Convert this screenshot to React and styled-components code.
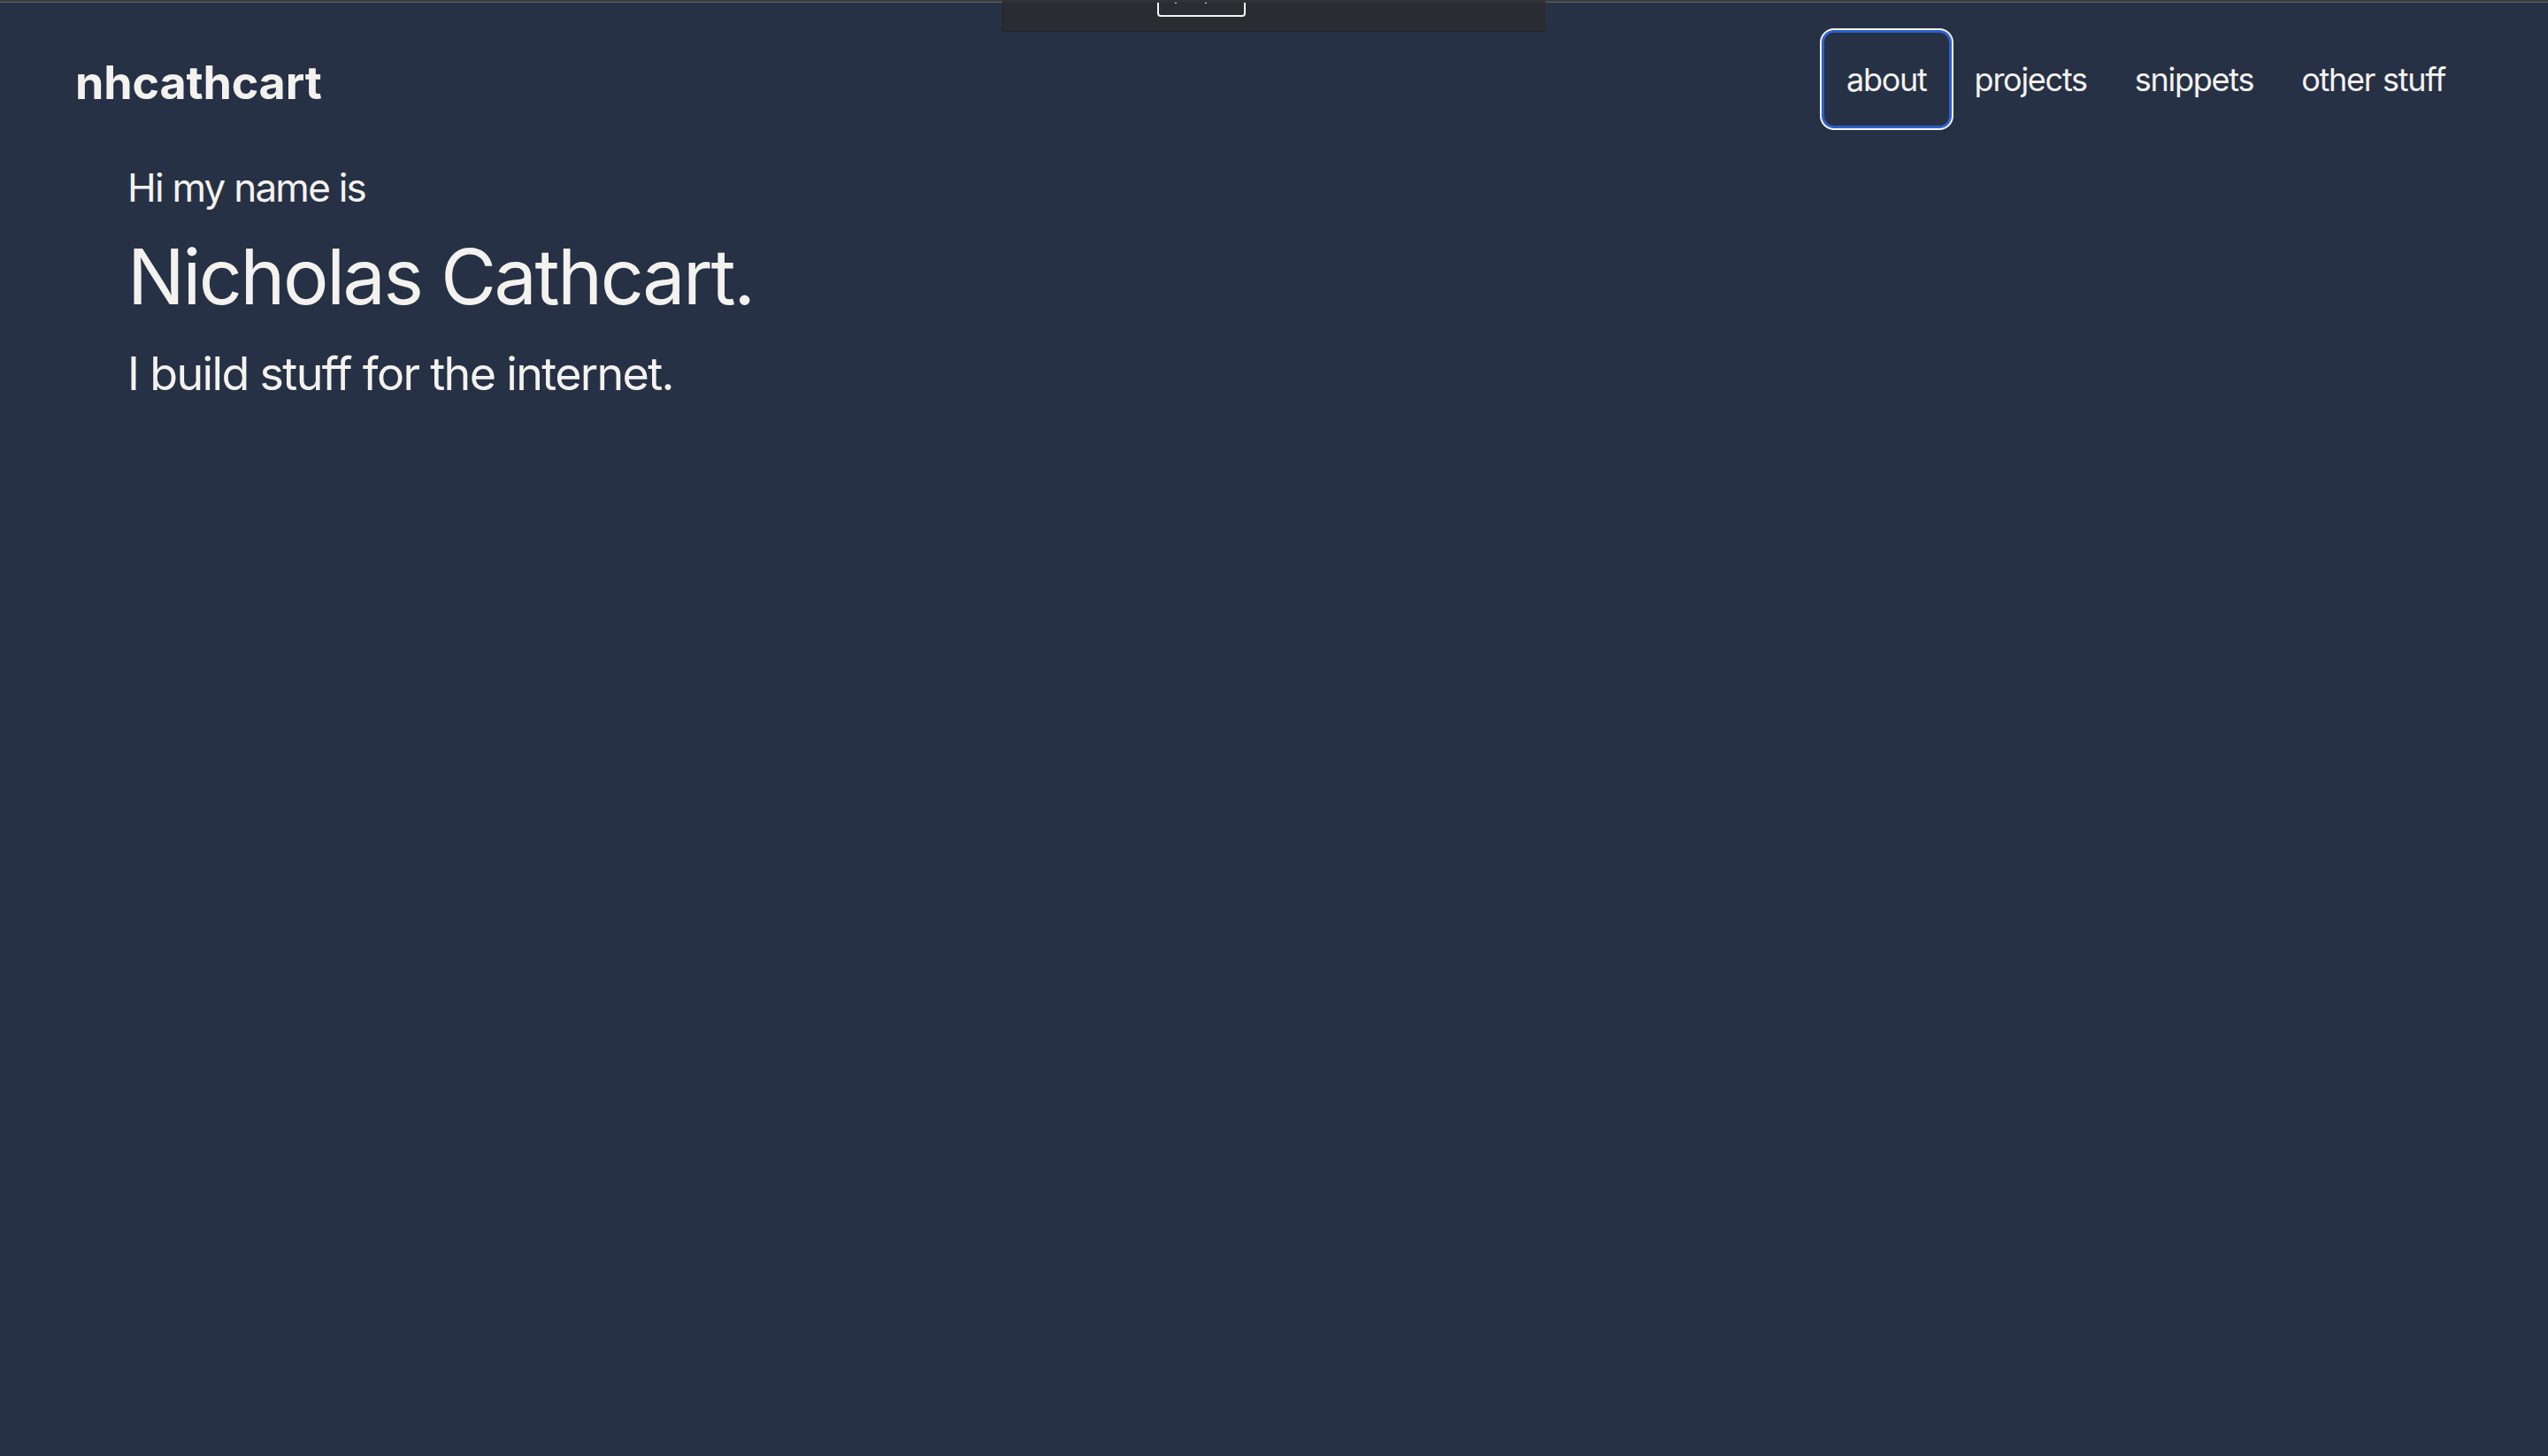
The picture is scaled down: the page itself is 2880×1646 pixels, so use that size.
import React from 'react';
import styled, { createGlobalStyle } from 'styled-components';

const GlobalStyle = createGlobalStyle`
  html, body {
    margin: 0;
    padding: 0;
    background: #263145;
  }
  body {
    font-family: Inter, "Noto Sans", sans-serif;
    color: #f4f2ef;
    min-height: 1646px;
  }
`;

const TopEdge = styled.div`
  height: 3px;
  background: #3b3b3c;
  border-bottom: 1px solid #626364;
  box-sizing: border-box;
`;

// dev toolbar that hangs over the top of the page
const DevPanel = styled.div`
  position: fixed;
  top: 0;
  left: 50%;
  transform: translateX(-50%);
  width: 614px;
  height: 36px;
  box-sizing: border-box;
  background: #2a2c32;
  border-top: 3px solid #313237;
  border-left: 1px solid #20252f;
  border-bottom: 1px solid #1d2330;
  padding-left: 174px;
  overflow: hidden;
`;

const DevButton = styled.div`
  width: 100px;
  height: 30px;
  margin-top: -14px;
  box-sizing: border-box;
  border: 2px solid #f2f2f2;
  border-radius: 4px;
  position: relative;

  &::before,
  &::after {
    content: '';
    position: absolute;
    top: 11px;
    width: 2px;
    height: 2px;
    background: #e8e8e8;
  }
  &::before { left: 18px; }
  &::after { left: 52px; }
`;

const Header = styled.header`
  display: flex;
  align-items: center;
  justify-content: space-between;
  padding: 32px 89px 0 85px;
`;

const Logo = styled.a`
  font-size: 52px;
  font-weight: 700;
  letter-spacing: -0.003em;
  color: #f4f2ef;
  text-decoration: none;
  line-height: 1.21;
  margin-top: 10px;
`;

const Nav = styled.nav`
  display: flex;
  align-items: center;
`;

const NavLink = styled.a`
  display: flex;
  align-items: center;
  height: 109px;
  padding: 0 27px;
  font-size: 36px;
  letter-spacing: -0.035em;
  color: #f4f2ef;
  text-decoration: none;
  border-radius: 13px;
  box-shadow: ${p => p.$focused
    ? 'inset 0 0 0 2px #2b5fcb, 0 0 0 1px #2b5fcb, 0 0 0 3px #f4f4f4'
    : 'none'};
`;

const Hero = styled.main`
  padding: 0 144px;
`;

const Line = styled.p`
  margin: ${p => p.$gap}px 0 0;
  font-size: ${p => p.$size}px;
  line-height: 1.21;
  letter-spacing: ${p => p.$track}em;
  font-weight: 400;
`;

const links = ['about', 'projects', 'snippets', 'other stuff'];

export default function App() {
  return (
    <>
      <GlobalStyle />
      <TopEdge />
      <DevPanel>
        <DevButton />
      </DevPanel>
      <Header>
        <Logo href="#">nhcathcart</Logo>
        <Nav>
          {links.map((l, i) => (
            <NavLink key={l} href="#" $focused={i === 0}>{l}</NavLink>
          ))}
        </Nav>
      </Header>
      <Hero>
        <Line $size={44} $gap={42} $track={-0.04}>Hi my name is</Line>
        <Line $size={86} $gap={22} $track={-0.028}>Nicholas Cathcart.</Line>
        <Line $size={52} $gap={27} $track={-0.032}>I build stuff for the internet.</Line>
      </Hero>
    </>
  );
}
